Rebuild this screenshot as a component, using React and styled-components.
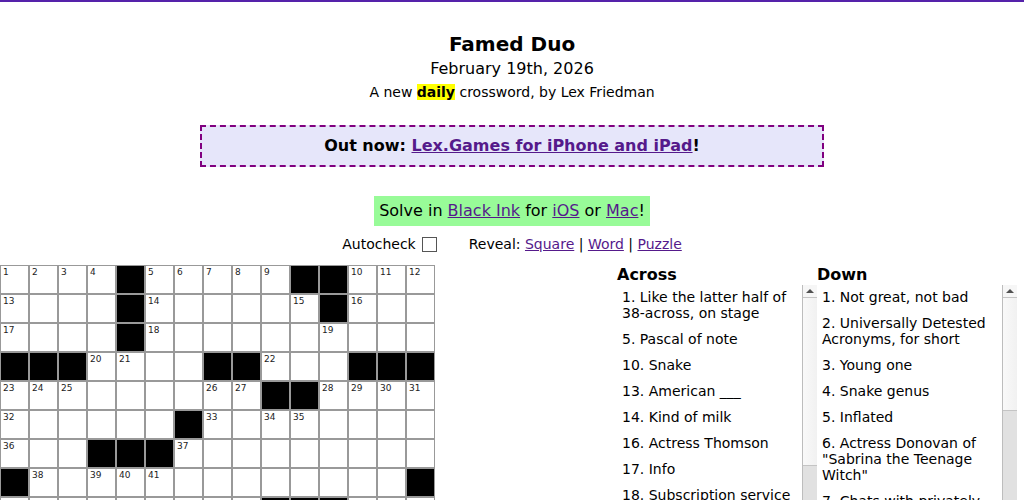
import React from "react";
import styled, { createGlobalStyle } from "styled-components";

const GlobalStyle = createGlobalStyle`
  html, body { margin: 0; padding: 0; background: #fff; }
  body { font-family: "DejaVu Sans", "Liberation Sans", sans-serif; color: #000; }
`;

const TOP = [
  "....#.....##...",
  "....#......#...",
  "....#..........",
  "###....##...###",
  ".........##....",
  "......#........",
  "...###.........",
  "#.............#",
];
const ROWS = [...TOP, ...TOP.slice(0, 7).reverse().map((r) => r.split("").reverse().join(""))];

function buildGrid() {
  const n = 15;
  const black = (r, c) => r < 0 || c < 0 || r >= n || c >= n || ROWS[r][c] === "#";
  let num = 1;
  const cells = [];
  for (let r = 0; r < n; r++) {
    for (let c = 0; c < n; c++) {
      if (black(r, c)) {
        cells.push({ key: `${r}-${c}`, black: true });
        continue;
      }
      const across = black(r, c - 1) && !black(r, c + 1);
      const down = black(r - 1, c) && !black(r + 1, c);
      cells.push({ key: `${r}-${c}`, black: false, num: across || down ? num++ : null });
    }
  }
  return cells;
}

const ACROSS = [
  "1. Like the latter half of 38-across, on stage",
  "5. Pascal of note",
  "10. Snake",
  "13. American ___",
  "14. Kind of milk",
  "16. Actress Thomson",
  "17. Info",
  "18. Subscription service",
  "19. Gaming console",
  "20. Ring decision",
  "22. Salon offering",
  "23. Tennis legend",
  "28. Pricey",
];

const DOWN = [
  "1. Not great, not bad",
  "2. Universally Detested Acronyms, for short",
  "3. Young one",
  "4. Snake genus",
  "5. Inflated",
  "6. Actress Donovan of \"Sabrina the Teenage Witch\"",
  "7. Chats with privately online",
  "8. Frozen treat",
  "9. Fork part",
  "10. Paddle",
  "11. Reverberate",
  "12. Fashion monogram",
];

const Page = styled.div`
  border-top: 2px solid #5522aa;
  width: 1024px;
  min-height: 498px;
`;

const Header = styled.header`
  display: flex;
  flex-direction: column;
  align-items: center;
  padding-top: 31px;
`;

const Title = styled.h1`
  margin: 0;
  font-size: 20px;
  line-height: 22px;
  font-weight: bold;
`;

const DateLine = styled.div`
  margin-top: 4px;
  font-size: 16px;
  line-height: 20px;
`;

const Tagline = styled.div`
  margin-top: 4px;
  font-size: 14px;
  line-height: 18px;
`;

const Highlight = styled.b`
  background: #ffff00;
`;

const Banner = styled.div`
  box-sizing: border-box;
  width: 624px;
  margin: 24px auto 0;
  padding: 10px 0;
  border: 2px dashed #800080;
  background: #e6e6fa;
  text-align: center;
  font-size: 16px;
  line-height: 18px;
  font-weight: bold;
`;

const Link = styled.a`
  color: #551a8b;
  text-decoration: underline;
  cursor: pointer;
`;

const PromoRow = styled.div`
  display: flex;
  justify-content: center;
  margin-top: 29px;
`;

const Promo = styled.div`
  background: #98fb98;
  padding: 5px 5px;
  font-size: 16px;
  line-height: 20px;
`;

const Controls = styled.div`
  display: flex;
  justify-content: center;
  align-items: center;
  gap: 32px;
  margin-top: 9px;
  font-size: 14px;
  line-height: 18px;
`;

const ControlGroup = styled.span`
  display: inline-flex;
  align-items: center;
`;

const Checkbox = styled.input`
  appearance: none;
  -webkit-appearance: none;
  box-sizing: border-box;
  margin: 0 0 0 6px;
  width: 15px;
  height: 15px;
  border: 1px solid #555;
  border-radius: 0;
  background: #fff;
`;

const Main = styled.main`
  display: flex;
  justify-content: space-between;
  align-items: flex-start;
  margin-top: 12px;
  padding-right: 7px;
`;

const Grid = styled.div`
  display: grid;
  grid-template-columns: repeat(15, 29px);
  grid-auto-rows: 29px;
`;

const Cell = styled.div`
  box-sizing: border-box;
  border: 1px solid #999;
  background: ${(p) => (p.$black ? "#000" : "#fff")};
  padding: 1px 0 0 2px;
  font-size: 9px;
  line-height: 10px;
  color: #222;
`;

const ClueArea = styled.div`
  display: flex;
`;

const ClueColumn = styled.section`
  width: 200px;
`;

const ClueTitle = styled.h2`
  margin: 0;
  font-size: 16px;
  line-height: 18px;
  font-weight: bold;
  padding-top: 1px;
`;

const ClueBox = styled.div`
  display: flex;
  margin-top: 1px;
  height: 435px;
`;

const ClueItems = styled.ol`
  flex: 1;
  list-style: none;
  margin: 0;
  padding: 4px 0 0 5px;
  overflow: hidden;
`;

const ClueItem = styled.li`
  font-size: 14px;
  line-height: 16px;
  margin-bottom: 10px;
`;

const ScrollBar = styled.div`
  display: flex;
  flex-direction: column;
  width: 15px;
  box-sizing: border-box;
  border-left: 1px solid #bdbdbd;
  background: #e1e1e1;
`;

const ScrollButton = styled.div`
  display: flex;
  justify-content: center;
  align-items: center;
  height: 13px;
  box-sizing: border-box;
  border-bottom: 1px solid #c4c4c4;
  background: #f6f6f6;
`;

const UpArrow = styled.span`
  width: 0;
  height: 0;
  border-left: 4px solid transparent;
  border-right: 4px solid transparent;
  border-bottom: 4px solid #505050;
`;

const Thumb = styled.div`
  height: ${(p) => p.$size}px;
  box-sizing: border-box;
  border-bottom: 1px solid #c4c4c4;
  background: linear-gradient(to right, #f9f9f9, #f1f1f1);
`;

function Clues({ title, items, thumb }) {
  return (
    <ClueColumn>
      <ClueTitle>{title}</ClueTitle>
      <ClueBox>
        <ClueItems>
          {items.map((t) => (
            <ClueItem key={t}>{t}</ClueItem>
          ))}
        </ClueItems>
        <ScrollBar>
          <ScrollButton>
            <UpArrow />
          </ScrollButton>
          <Thumb $size={thumb} />
        </ScrollBar>
      </ClueBox>
    </ClueColumn>
  );
}

export default function App() {
  const cells = buildGrid();
  return (
    <Page>
      <GlobalStyle />
      <Header>
        <Title>Famed Duo</Title>
        <DateLine>February 19th, 2026</DateLine>
        <Tagline>
          A new <Highlight>daily</Highlight> crossword, by Lex Friedman
        </Tagline>
      </Header>
      <Banner>
        Out now: <Link>Lex.Games for iPhone and iPad</Link>!
      </Banner>
      <PromoRow>
        <Promo>
          Solve in <Link>Black Ink</Link> for <Link>iOS</Link> or <Link>Mac</Link>!
        </Promo>
      </PromoRow>
      <Controls>
        <ControlGroup>
          Autocheck <Checkbox type="checkbox" />
        </ControlGroup>
        <ControlGroup>
          Reveal:&nbsp;<Link>Square</Link>&nbsp;|&nbsp;<Link>Word</Link>&nbsp;|&nbsp;<Link>Puzzle</Link>
        </ControlGroup>
      </Controls>
      <Main>
        <Grid>
          {cells.map((c) => (
            <Cell key={c.key} $black={c.black}>
              {c.num}
            </Cell>
          ))}
        </Grid>
        <ClueArea>
          <Clues title="Across" items={ACROSS} thumb={168} />
          <Clues title="Down" items={DOWN} thumb={113} />
        </ClueArea>
      </Main>
    </Page>
  );
}
